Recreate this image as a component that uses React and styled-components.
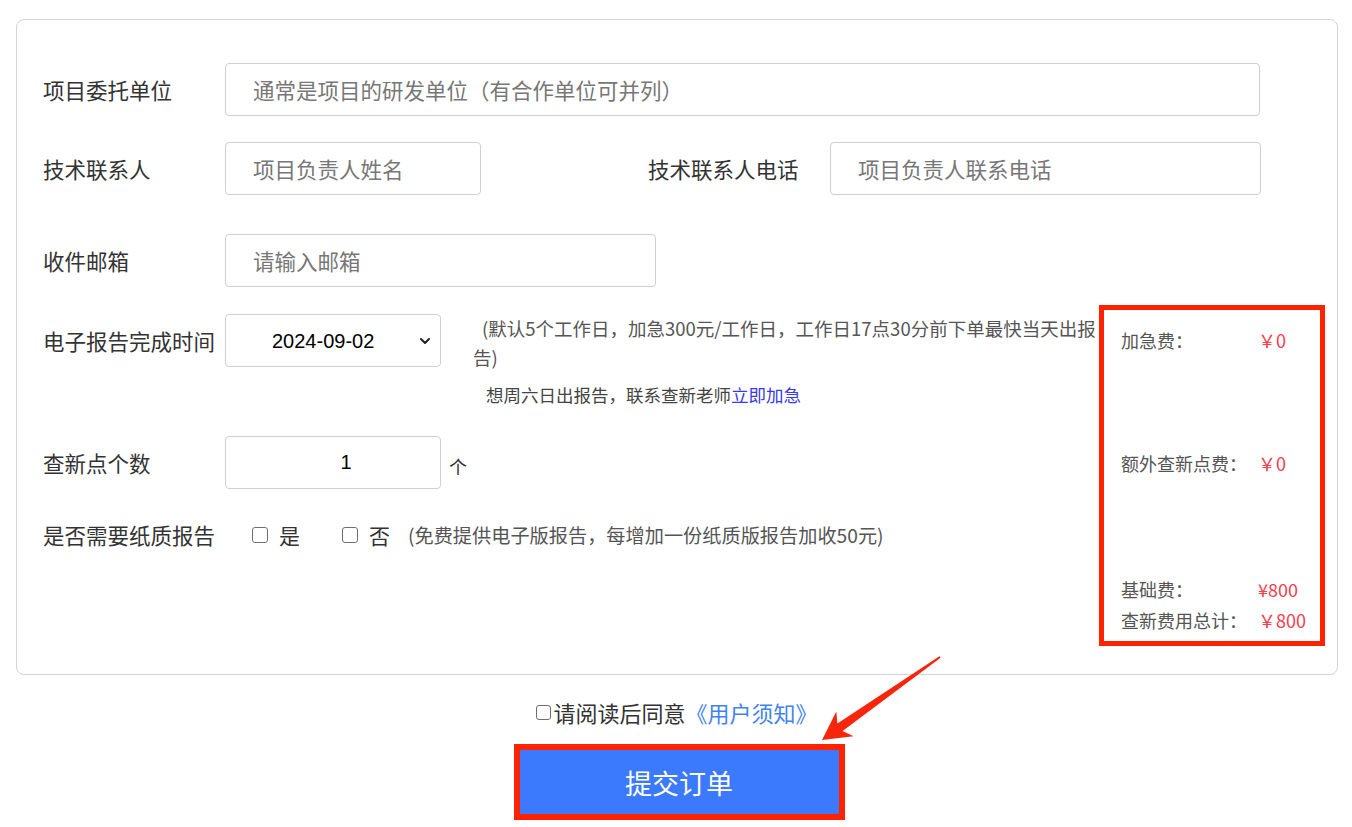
import React from 'react'
import styled, { createGlobalStyle } from 'styled-components'
import { ChevronDown } from 'lucide-react'

const GlobalStyle = createGlobalStyle`
  body {
    margin: 0;
    background: #fff;
    color: #333;
    font-family: "Noto Sans CJK SC", "Noto Sans", sans-serif;
  }
`

const Page = styled.div`
  position: relative;
  padding: 19px 14px 0 16px;
`

const Card = styled.div`
  border: 1px solid #d4d4d4;
  border-radius: 8px;
  padding: 43px 12px 28px 26px;
`

const Row = styled.div`
  display: flex;
  align-items: ${props => props.$align || 'center'};
  margin-top: ${props => props.$gap || 0}px;
`

const Label = styled.div`
  flex-shrink: 0;
  width: 182px;
  margin-left: ${props => props.$offset || 0}px;
  font-size: 21.5px;
  line-height: 53px;
  color: #333;
  white-space: nowrap;
`

const TextInput = styled.input`
  box-sizing: border-box;
  flex-shrink: 0;
  width: ${props => props.$width}px;
  height: 53px;
  padding: 0 27px;
  border: 1px solid #cfcfcf;
  border-radius: 4px;
  font-family: inherit;
  font-size: 21.5px;
  color: #333;
  outline: none;

  &::placeholder {
    color: #777;
  }
`

const Lower = styled.div`
  display: flex;
  align-items: flex-start;
  justify-content: space-between;
  margin-top: 18px;
`

const LeftCol = styled.div`
  flex: 1;
  min-width: 0;
  padding-top: 9px;
`

const SelectWrap = styled.div`
  position: relative;
  flex-shrink: 0;
  width: 216px;
  height: 53px;
`

const DateSelect = styled.select`
  appearance: none;
  box-sizing: border-box;
  width: 100%;
  height: 100%;
  padding-left: 46px;
  border: 1px solid #cfcfcf;
  border-radius: 4px;
  background: #fff;
  font-family: "Liberation Sans", Arial, sans-serif;
  font-size: 20px;
  color: #000;
  outline: none;
`

const Chevron = styled(ChevronDown)`
  position: absolute;
  right: 8px;
  top: 19px;
  pointer-events: none;
`

const Note = styled.div`
  flex-shrink: 0;
  margin-left: 32px;
  font-size: 18.5px;
  line-height: 29px;
  color: #555;
  white-space: nowrap;
`

const NoteLead = styled.span`
  padding-left: 9px;
`

const Tip = styled.div`
  margin-top: 8px;
  padding-left: 13px;
  font-size: 17.5px;
  color: #444;
`

const UrgentLink = styled.a`
  color: #3838ee;
  text-decoration: none;
`

const CountInput = styled.input`
  box-sizing: border-box;
  width: 216px;
  height: 53px;
  padding-left: 28px;
  border: 1px solid #cfcfcf;
  border-radius: 4px;
  text-align: center;
  font-family: "Liberation Sans", Arial, sans-serif;
  font-size: 20px;
  color: #000;
  outline: none;
`

const Unit = styled.span`
  margin: 6px 0 0 8px;
  font-size: 18px;
  color: #333;
`

const Option = styled.label`
  display: flex;
  align-items: center;
  margin-left: ${props => props.$offset}px;
  font-size: 21px;
  color: #333;
`

const Check = styled.input.attrs({ type: 'checkbox' })`
  appearance: none;
  box-sizing: border-box;
  flex-shrink: 0;
  width: ${props => props.$size || 16}px;
  height: ${props => props.$size || 16}px;
  margin: 0 ${props => props.$space || 11}px 0 0;
  border: 1px solid #6f6f6f;
  border-radius: 3px;
  background: #fff;
`

const PaperNote = styled.span`
  margin-left: 18px;
  font-size: 19.2px;
  color: #555;
`

const FeePanel = styled.div`
  box-sizing: border-box;
  flex-shrink: 0;
  width: 226px;
  height: 341px;
  padding: 18px 0 0 17px;
  border: 5px solid #ff2200;
`

const FeeRow = styled.div`
  display: flex;
  margin-top: ${props => props.$gap || 0}px;
  font-size: 18px;
  line-height: 24px;
  white-space: nowrap;
`

const FeeLabel = styled.span`
  width: 137px;
  color: #555;
`

const FeeValue = styled.span`
  color: #f2404e;
`

const Agreement = styled.div`
  display: flex;
  align-items: center;
  justify-content: center;
  margin-top: 22px;
  font-size: 22px;
  line-height: 30px;
  color: #333;
`

const NoticeLink = styled.a`
  color: #3f83f3;
  text-decoration: none;
`

const SubmitFrame = styled.div`
  box-sizing: border-box;
  width: 331px;
  margin: 17px auto 0;
  border: 6px solid #ff2200;
  transform: translateX(2px);
`

const SubmitButton = styled.button`
  display: block;
  width: 100%;
  height: 64px;
  border: none;
  background: #3b79fd;
  color: #fff;
  font-family: inherit;
  font-size: 27px;
`

const Arrow = styled.svg`
  position: absolute;
  left: 800px;
  top: 640px;
  pointer-events: none;
`

export default function App () {
  return (
    <Page>
      <GlobalStyle />
      <Card>
        <Row>
          <Label>项目委托单位</Label>
          <TextInput $width={1035} placeholder='通常是项目的研发单位（有合作单位可并列）' />
        </Row>
        <Row $gap={26}>
          <Label>技术联系人</Label>
          <TextInput $width={256} placeholder='项目负责人姓名' />
          <Label $offset={167}>技术联系人电话</Label>
          <TextInput $width={431} placeholder='项目负责人联系电话' />
        </Row>
        <Row $gap={39}>
          <Label>收件邮箱</Label>
          <TextInput $width={431} placeholder='请输入邮箱' />
        </Row>
        <Lower>
          <LeftCol>
            <Row $align='flex-start'>
              <Label>电子报告完成时间</Label>
              <SelectWrap>
                <DateSelect defaultValue='2024-09-02'>
                  <option value='2024-09-02'>2024-09-02</option>
                </DateSelect>
                <Chevron size={16} strokeWidth={3} color='#222' />
              </SelectWrap>
              <Note>
                <NoteLead>(默认5个工作日，加急300元/工作日，工作日17点30分前下单最快当天出报</NoteLead>
                <br />告)
                <Tip>
                  想周六日出报告，联系查新老师<UrgentLink href='#'>立即加急</UrgentLink>
                </Tip>
              </Note>
            </Row>
            <Row $gap={27}>
              <Label>查新点个数</Label>
              <CountInput defaultValue='1' />
              <Unit>个</Unit>
            </Row>
            <Row $gap={19}>
              <Label>是否需要纸质报告</Label>
              <Option $offset={27}><Check />是</Option>
              <Option $offset={42}><Check />否</Option>
              <PaperNote>(免费提供电子版报告，每增加一份纸质版报告加收50元)</PaperNote>
            </Row>
          </LeftCol>
          <FeePanel>
            <FeeRow><FeeLabel>加急费：</FeeLabel><FeeValue>￥0</FeeValue></FeeRow>
            <FeeRow $gap={99}><FeeLabel>额外查新点费：</FeeLabel><FeeValue>￥0</FeeValue></FeeRow>
            <FeeRow $gap={102}><FeeLabel>基础费：</FeeLabel><FeeValue>¥800</FeeValue></FeeRow>
            <FeeRow $gap={7}><FeeLabel>查新费用总计：</FeeLabel><FeeValue>￥800</FeeValue></FeeRow>
          </FeePanel>
        </Lower>
      </Card>
      <Agreement>
        <Check $size={15} $space={2} />请阅读后同意<NoticeLink href='#'>《用户须知》</NoticeLink>
      </Agreement>
      <SubmitFrame>
        <SubmitButton>提交订单</SubmitButton>
      </SubmitFrame>
      <Arrow width='160' height='120' viewBox='0 0 160 120'>
        <polygon
          points='140.6,17.8 42.6,91 53.5,96.2 22,100 36.3,71.6 37.4,83.6 139.4,16.2'
          fill='#f5260c'
        />
      </Arrow>
    </Page>
  )
}
